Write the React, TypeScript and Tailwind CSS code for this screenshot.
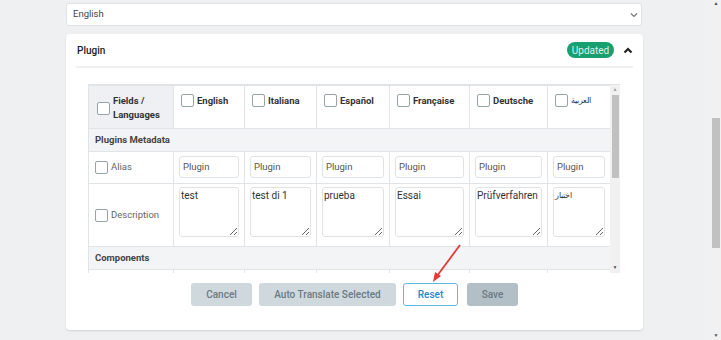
import React from 'react';

const langs = [
  { name: 'English', alias: 'Plugin', desc: 'test' },
  { name: 'Italiana', alias: 'Plugin', desc: 'test di 1' },
  { name: 'Español', alias: 'Plugin', desc: 'prueba' },
  { name: 'Française', alias: 'Plugin', desc: 'Essai' },
  { name: 'Deutsche', alias: 'Plugin', desc: 'Prüfverfahren' },
  { name: 'العربية', alias: 'Plugin', desc: 'اختبار', rtl: true },
];

const colWidths = [85, 71, 72, 73, 80, 78, 63];

const Box: React.FC = () => (
  <span className="inline-block w-[13px] h-[13px] shrink-0 rounded-[2px] border border-[#97a3ab] bg-white" />
);

const TranslationTable: React.FC = () => {
  return (
    <div className="flex h-[189px] w-[532px] border-t border-[#e1e4e7] overflow-hidden">
      <div className="w-[522px] overflow-hidden">
        <table className="table-fixed border-collapse w-[522px] text-[9.5px]">
          <colgroup>
            {colWidths.map((w, i) => (
              <col key={i} style={{ width: w }} />
            ))}
          </colgroup>
          <tbody>
            <tr className="h-[43px]">
              <td className="border border-[#e1e4e7] bg-[#eef0f3] align-top pl-[8px] pt-[8px]">
                <div className="flex items-center gap-[3px]">
                  <Box />
                  <div className="font-bold text-[#333] leading-[14px]">
                    Fields /<br />Languages
                  </div>
                </div>
              </td>
              {langs.map((l) => (
                <td key={l.name} className="border border-[#e1e4e7] align-top pl-[7px] pt-[8px]">
                  <div className="flex items-center gap-[3px]">
                    <Box />
                    {l.rtl ? (
                      <span className="text-[8px] text-[#333] leading-[13px]">{l.name}</span>
                    ) : (
                      <span className="font-bold text-[#333] leading-[13px]">{l.name}</span>
                    )}
                  </div>
                </td>
              ))}
            </tr>
            <tr className="h-[23px] bg-[#f3f4f6]">
              <td colSpan={7} className="border border-[#e1e4e7] pl-[6px] font-bold text-[#444]">
                Plugins Metadata
              </td>
            </tr>
            <tr className="h-[32px]">
              <td className="border border-[#e1e4e7] pl-[6px]">
                <div className="flex items-center gap-[3px]">
                  <Box />
                  <span className="text-[#666]">Alias</span>
                </div>
              </td>
              {langs.map((l) => (
                <td key={l.name} className="border border-[#e1e4e7] px-[5px] pb-[2px]">
                  <input
                    readOnly
                    value={l.alias}
                    className="w-full h-[22px] rounded-[3px] border border-[#dfe3e6] px-[3px] text-[9.5px] text-[#555] outline-none"
                  />
                </td>
              ))}
            </tr>
            <tr className="h-[63px]">
              <td className="border border-[#e1e4e7] pl-[6px]">
                <div className="flex items-center gap-[3px]">
                  <Box />
                  <span className="text-[#666]">Description</span>
                </div>
              </td>
              {langs.map((l) => (
                <td key={l.name} className="border border-[#e1e4e7] px-[5px] pt-[3px] pb-[9px] align-top">
                  <textarea
                    readOnly
                    value={l.desc}
                    className={
                      l.rtl
                        ? 'block w-full h-[50px] rounded-[3px] border border-[#dfe3e6] px-[1px] py-[1px] text-[8px] leading-[13px] text-[#333] outline-none'
                        : 'block w-full h-[50px] rounded-[3px] border border-[#dfe3e6] px-[1px] py-[1px] text-[10px] leading-[13px] text-[#333] outline-none'
                    }
                  />
                </td>
              ))}
            </tr>
            <tr className="h-[23px] bg-[#f3f4f6]">
              <td colSpan={7} className="border border-[#e1e4e7] pl-[6px] font-bold text-[#444]">
                Components
              </td>
            </tr>
            <tr className="h-[40px]">
              {colWidths.map((_, i) => (
                <td key={i} className="border border-[#e1e4e7]" />
              ))}
            </tr>
          </tbody>
        </table>
      </div>
      <div className="w-[10px] bg-[#f1f1f1] flex flex-col items-center">
        <div className="h-[10px] flex items-center justify-center text-[5px] text-[#a3a3a3]">▲</div>
        <div className="w-[7px] h-[83px] bg-[#c1c1c1]" />
        <div className="flex-1" />
        <div className="h-[10px] flex items-center justify-center text-[5px] text-[#505050]">▼</div>
      </div>
    </div>
  );
};

const App: React.FC = () => {
  return (
    <div
      className="relative flex h-[340px] w-[721px] overflow-hidden bg-[#eff0f2]"
      style={{ fontFamily: 'Roboto, "Noto Sans", sans-serif' }}
    >
      <div className="flex-1 pl-[66px] pt-[3px]">
        <div className="w-[576px] h-[23px] flex items-center justify-between rounded-[3px] border border-[#dfe2e5] bg-white pl-[6px] pr-[3px] text-[9.5px] text-[#444]">
          <span>English</span>
          <svg width="8" height="6" viewBox="0 0 8 6">
            <polyline points="1,1.5 4,4.5 7,1.5" fill="none" stroke="#777" strokeWidth="1.2" />
          </svg>
        </div>

        <div className="mt-[8px] w-[577px] h-[296px] rounded-[4px] bg-white shadow-[0_1px_2px_rgba(0,0,0,0.12)] px-[10px]">
          <div className="flex items-center justify-between pl-[1px] pt-[8px] pb-[8px]">
            <span className="text-[10px] font-medium text-[#222]">Plugin</span>
            <div className="flex items-center gap-[9px]">
              <span className="h-[16px] w-[47px] flex items-center justify-center rounded-full bg-[#17a06f] text-[10px] text-[#d9f2e8]">
                Updated
              </span>
              <svg width="10" height="7" viewBox="0 0 10 7">
                <polyline points="1.5,5.5 5,2 8.5,5.5" fill="none" stroke="#222" strokeWidth="2.2" />
              </svg>
            </div>
          </div>
          <div className="h-[2px] bg-[#eef0f2]" />

          <div className="mt-[16px] ml-[12px]">
            <TranslationTable />
          </div>

          <div className="mt-[10px] flex justify-center items-center gap-[7px] text-[10px] font-medium">
            <button className="w-[61px] h-[23px] rounded-[3px] bg-[#cfd8dc] text-[#6b7a82]">Cancel</button>
            <button className="w-[137px] h-[23px] rounded-[3px] bg-[#cfd8dc] text-[#6b7a82]">
              Auto Translate Selected
            </button>
            <button className="w-[55px] h-[23px] rounded-[3px] border border-[#5db8e4] bg-white text-[#1c8bcb]">
              Reset
            </button>
            <button className="ml-[2px] w-[51px] h-[23px] rounded-[3px] bg-[#b3bfc6] text-[#6c7a83]">Save</button>
          </div>
        </div>
      </div>

      <div className="w-[10px] bg-[#f1f1f1] flex flex-col items-center">
        <div className="h-[8px] flex items-center justify-center text-[5px] text-[#505050]">▲</div>
        <div className="mt-[110px] w-[8px] h-[130px] bg-[#c1c1c1]" />
        <div className="flex-1" />
        <div className="h-[8px] flex items-center justify-center text-[5px] text-[#505050]">▼</div>
      </div>

      <svg className="absolute left-[425px] top-[240px]" width="45" height="48" viewBox="0 0 45 48">
        <line x1="35" y1="5" x2="12" y2="36" stroke="#e53935" strokeWidth="1.8" />
        <polygon points="8,42 10,32 16,36" fill="#e53935" />
      </svg>
    </div>
  );
};

export default App;
